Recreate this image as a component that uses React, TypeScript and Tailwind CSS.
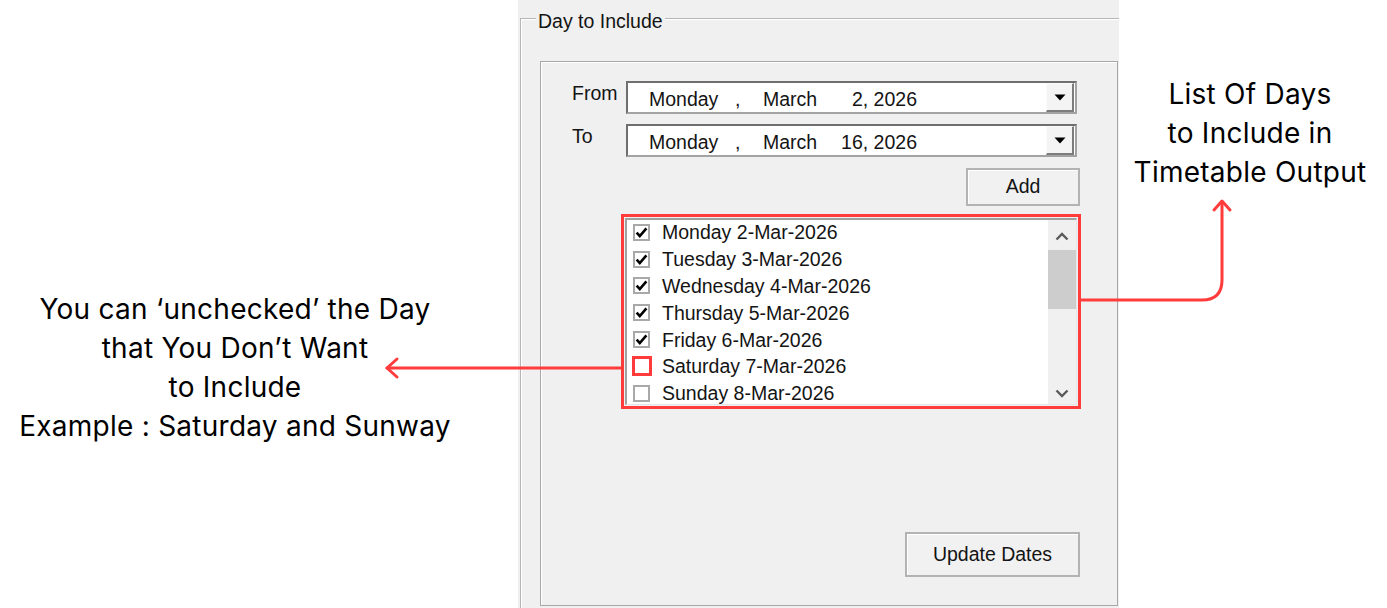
import type { ReactNode } from 'react';

type DayRow = {
  label: string;
  checked: boolean;
  flagged?: boolean;
};

const days: DayRow[] = [
  { label: 'Monday 2-Mar-2026', checked: true },
  { label: 'Tuesday 3-Mar-2026', checked: true },
  { label: 'Wednesday 4-Mar-2026', checked: true },
  { label: 'Thursday 5-Mar-2026', checked: true },
  { label: 'Friday 6-Mar-2026', checked: true },
  { label: 'Saturday 7-Mar-2026', checked: false, flagged: true },
  { label: 'Sunday 8-Mar-2026', checked: false },
];

// WinForms style date picker, date parts laid out in fixed slots
const DateField = ({ day }: { day: string }) => (
  <div className="flex h-[33px] w-[451px] items-stretch border-2 border-[#a3a3a3] border-t-[#6f6f6f] border-l-[#6f6f6f] bg-white">
    <div className="flex flex-1 items-center pl-[21px] pt-[4px]">
      <span className="w-[86px]">Monday</span>
      <span className="w-[28px]">,</span>
      <span className="w-[66px]">March</span>
      <span className="w-[88px] text-right">{day}</span>
    </div>
    <div className="mr-[1px] flex w-[28px] items-center justify-center border-t border-l border-t-[#fafafa] border-l-[#fafafa] border-r-2 border-b-2 border-r-[#7d7d7d] border-b-[#7d7d7d] bg-[#f4f4f4]">
      <svg width="12" height="7" viewBox="0 0 12 7">
        <path d="M0.5 0.5H11.5L6 6.5Z" fill="#000" />
      </svg>
    </div>
  </div>
);

const WinButton = ({ children, className }: { children: ReactNode; className: string }) => (
  <div
    className={`flex items-center justify-center border-2 border-[#b3b3b3] bg-[#f1f1f1] shadow-[inset_1px_1px_0_#ffffff] ${className}`}
  >
    {children}
  </div>
);

const CheckBox = ({ checked, flagged }: { checked: boolean; flagged?: boolean }) => {
  if (flagged) {
    return <div className="-ml-[1px] mr-[-2px] h-[20px] w-[20px] border-[3px] border-[#ff3b3b] bg-white" />;
  }
  return (
    <div className="flex h-[17px] w-[17px] items-center justify-center border-2 border-[#a9a9a9] bg-white">
      {checked && (
        <svg width="13" height="13" viewBox="0 0 13 13">
          <path
            d="M1.6 6.6L4.8 10L11.4 2.4"
            fill="none"
            stroke="#000"
            strokeWidth="2.6"
            strokeLinejoin="miter"
          />
        </svg>
      )}
    </div>
  );
};

const Chevron = ({ up }: { up?: boolean }) => (
  <svg width="14" height="9" viewBox="0 0 14 9">
    <path
      d={up ? 'M1.5 7.5L7 2L12.5 7.5' : 'M1.5 1.5L7 7L12.5 1.5'}
      fill="none"
      stroke="#5a5a5a"
      strokeWidth="2.4"
    />
  </svg>
);

export default function App() {
  return (
    <div className="relative flex h-[608px] w-[1387px] overflow-hidden bg-white">
      {/* Left annotation */}
      <div className="w-[518px] shrink-0">
        <div className="w-[470px] pt-[290px] text-center font-['Inter',sans-serif] text-[28px] leading-[39px] tracking-[0.25px] text-black">
          <p>You can ‘unchecked’ the Day</p>
          <p>that You Don’t Want</p>
          <p>to Include</p>
          <p>Example : Saturday and Sunway</p>
        </div>
      </div>

      {/* Form panel */}
      <div className="h-full w-[601px] shrink-0 bg-[#f0f0f0] pt-[18px] pl-[2px] font-['Liberation_Sans',Arial,sans-serif] text-[19.5px] text-[#141414]">
        <div className="relative h-full border-t border-l border-[#b6b6b6] pt-[42px] pl-[19px] shadow-[inset_1px_1px_0_#ffffff]">
          <span className="absolute -top-[9px] left-[15px] bg-[#f0f0f0] px-[2px] leading-[22px]">Day to Include</span>

          <div className="h-[545px] w-[578px] border border-[#a7a7a7] shadow-[inset_1px_1px_0_#ffffff]">
            {/* From / To */}
            <div className="mt-[19px] flex pl-[31px]">
              <span className="mt-[1px] w-[54px] leading-[22px]">From</span>
              <DateField day="2, 2026" />
            </div>
            <div className="mt-[10px] flex pl-[31px]">
              <span className="mt-[1px] w-[54px] leading-[22px]">To</span>
              <DateField day="16, 2026" />
            </div>

            <WinButton className="mt-[11px] ml-[425px] h-[38px] w-[114px]">Add</WinButton>

            {/* Highlighted day list */}
            <div className="mt-[8px] ml-[80px] h-[195px] w-[460px] border-[3px] border-[#ff3b3b] p-[1px]">
              <div className="flex h-full border-t-2 border-l-2 border-r border-b border-t-[#a0a0a0] border-l-[#a0a0a0] border-r-[#e6e6e6] border-b-[#e6e6e6] bg-white">
                <div className="flex-1 -mt-[1px]">
                  {days.map(day => (
                    <div key={day.label} className="flex h-[26.8px] items-center pl-[6px]">
                      <CheckBox checked={day.checked} flagged={day.flagged} />
                      <span className="ml-[12px] leading-[22px]">{day.label}</span>
                    </div>
                  ))}
                </div>
                <div className="flex w-[28px] flex-col bg-[#f0f0f0]">
                  <div className="flex h-[30px] items-start justify-center pt-[12px]">
                    <Chevron up />
                  </div>
                  <div className="h-[59px] bg-[#cdcdcd]" />
                  <div className="flex flex-1 items-end justify-center pb-[6px]">
                    <Chevron />
                  </div>
                </div>
              </div>
            </div>

            <WinButton className="mt-[123px] ml-[364px] h-[45px] w-[175px]">Update Dates</WinButton>
          </div>
        </div>
      </div>

      {/* Right annotation */}
      <div className="flex-1">
        <div className="w-[262px] pt-[75px] text-center font-['Inter',sans-serif] text-[28px] leading-[39px] tracking-[0.25px] text-black">
          <p>List Of Days</p>
          <p>to Include in</p>
          <p>Timetable Output</p>
        </div>
      </div>

      {/* Arrows */}
      <svg
        className="pointer-events-none absolute inset-0"
        width="1387"
        height="608"
        viewBox="0 0 1387 608"
      >
        <g fill="none" stroke="#ff3b3b" strokeWidth="3" strokeLinecap="round" strokeLinejoin="round">
          <path d="M621 368H387" />
          <path d="M397 359L387 368L397 377" />
          <path d="M1081 300H1202Q1222 300 1222 280V202" />
          <path d="M1214 210L1222 201L1230 210" />
        </g>
      </svg>
    </div>
  );
}
